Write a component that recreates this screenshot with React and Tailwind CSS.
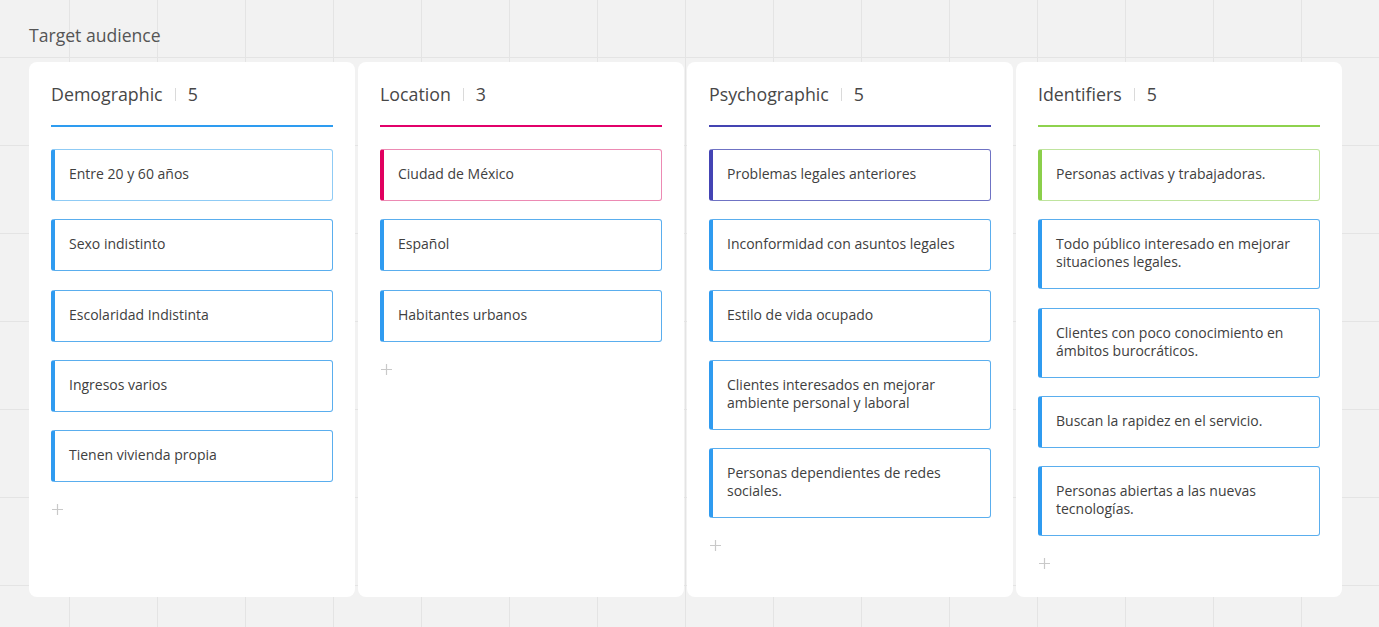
const columns = [
  {
    title: "Demographic",
    line: "border-[#2e9cf0]",
    items: [
      { text: "Entre 20 y 60 años", bar: "border-l-[#2f9bf0]", edge: "border-[#8fcbf5]" },
      { text: "Sexo indistinto" },
      { text: "Escolaridad Indistinta" },
      { text: "Ingresos varios" },
      { text: "Tienen vivienda propia" },
    ],
  },
  {
    title: "Location",
    line: "border-[#e2006a]",
    items: [
      { text: "Ciudad de México", bar: "border-l-[#e0005f]", edge: "border-[#ec8ab3]" },
      { text: "Español" },
      { text: "Habitantes urbanos" },
    ],
  },
  {
    title: "Psychographic",
    line: "border-[#4444b2]",
    items: [
      { text: "Problemas legales anteriores", bar: "border-l-[#4444b4]", edge: "border-[#6f73c4]" },
      { text: "Inconformidad con asuntos legales" },
      { text: "Estilo de vida ocupado" },
      { text: "Clientes interesados en mejorar ambiente personal y laboral" },
      { text: "Personas dependientes de redes sociales." },
    ],
  },
  {
    title: "Identifiers",
    line: "border-[#8ed24e]",
    items: [
      { text: "Personas activas y trabajadoras.", bar: "border-l-[#8bcf4b]", edge: "border-[#bfe49e]" },
      { text: "Todo público interesado en mejorar situaciones legales." },
      { text: "Clientes con poco conocimiento en ámbitos burocráticos." },
      { text: "Buscan la rapidez en el servicio." },
      { text: "Personas abiertas a las nuevas tecnologías." },
    ],
  },
];

function PlusIcon() {
  return (
    <svg width="11" height="11" viewBox="0 0 11 11" className="block">
      <path d="M5.5 0v11M0 5.5h11" stroke="#c9c9c9" strokeWidth="1.2" />
    </svg>
  );
}

function Card({ item }) {
  const bar = item.bar || "border-l-[#2f9bf0]";
  const edge = item.edge || "border-[#5aaeee]";
  return (
    <div
      className={`border ${edge} border-l-4 ${bar} rounded-[3px] bg-white pl-[14px] pr-4 pt-[15px] pb-[17px] text-[14px] leading-[18px] text-[#404040]`}
    >
      {item.text}
    </div>
  );
}

function Column({ col }) {
  return (
    <div className="w-[326px] h-[535px] bg-white rounded-lg px-[22px] pt-[19px]">
      <div className={`flex items-center pb-[18px] border-b-2 ${col.line}`}>
        <span className="text-[17.8px] leading-[26px] text-[#474747]">{col.title}</span>
        <span className="mx-[12px] w-px h-[13px] bg-[#dadada]" />
        <span className="text-[17.8px] leading-[26px] text-[#474747]">{col.items.length}</span>
      </div>
      <div className="mt-[22px] flex flex-col gap-[18.3px]">
        {col.items.map((item, i) => (
          <Card key={i} item={item} />
        ))}
      </div>
      <div className="mt-[22px] pl-px">
        <PlusIcon />
      </div>
    </div>
  );
}

export default function App() {
  return (
    <div
      className="w-[1379px] h-[627px] overflow-hidden bg-[#f2f2f2] bg-[linear-gradient(to_right,#e4e4e4_1px,transparent_1px),linear-gradient(to_bottom,#e4e4e4_1px,transparent_1px)] bg-[size:88px_88px] bg-[position:69px_57px] pl-[29px] pt-[24px]"
      style={{ fontFamily: '"Open Sans", "Noto Sans", sans-serif' }}
    >
      <div className="text-[17.6px] leading-[23px] text-[#555]">Target audience</div>
      <div className="mt-[15px] flex gap-[3px]">
        {columns.map((col) => (
          <Column key={col.title} col={col} />
        ))}
      </div>
    </div>
  );
}
